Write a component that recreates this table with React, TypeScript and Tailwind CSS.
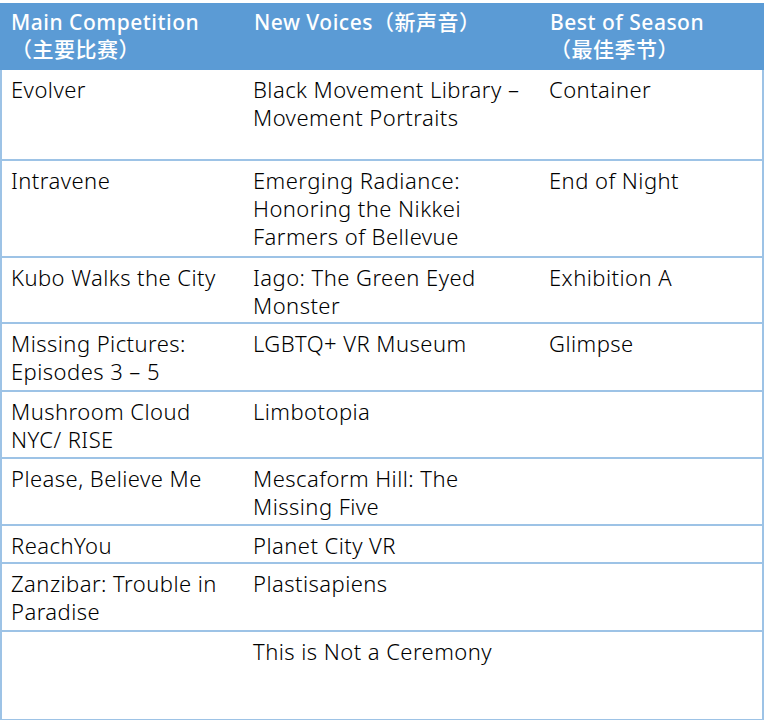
const rows: { h: string; cells: string[] }[] = [
  { h: "h-[89px]", cells: ["Evolver", "Black Movement Library –\nMovement Portraits", "Container"] },
  { h: "h-[97px]", cells: ["Intravene", "Emerging Radiance:\nHonoring the Nikkei\nFarmers of Bellevue", "End of Night"] },
  { h: "h-[66px]", cells: ["Kubo Walks the City", "Iago: The Green Eyed\nMonster", "Exhibition A"] },
  { h: "h-[68px]", cells: ["Missing Pictures:\nEpisodes 3 – 5", "LGBTQ+ VR Museum", "Glimpse"] },
  { h: "h-[67px]", cells: ["Mushroom Cloud\nNYC/ RISE", "Limbotopia", ""] },
  { h: "h-[67px]", cells: ["Please, Believe Me", "Mescaform Hill: The\nMissing Five", ""] },
  { h: "h-[38px]", cells: ["ReachYou", "Planet City VR", ""] },
  { h: "h-[68px]", cells: ["Zanzibar: Trouble in\nParadise", "Plastisapiens", ""] },
  { h: "h-[89px]", cells: ["", "This is Not a Ceremony", ""] },
];

const font = { fontFamily: '"Noto Sans", "Noto Sans CJK SC", sans-serif' };

export default function App() {
  return (
    <div className="w-[765px] h-[720px] bg-white pt-[3px]" style={font}>
      <div className="w-[764px] border-l-2 border-r-2 border-b-2 border-[#9dc3e6]">
        {/* header */}
        <div className="grid grid-cols-[242px_296px_1fr] h-[67px] bg-[#5b9bd5] text-white text-[21px] leading-[27px] tracking-[0.5px] font-medium pt-[6px] -ml-[2px] -mr-[2px] pl-[2px] pr-[2px]">
          <div className="pl-[9px]">
            Main Competition
            <br />（主要比赛）
          </div>
          <div className="pl-[10px]">New Voices（新声音）</div>
          <div className="pl-[10px]">
            Best of Season
            <br />（最佳季节）
          </div>
        </div>
        {rows.map((r, i) => (
          <div
            key={i}
            className={`grid grid-cols-[242px_296px_1fr] ${r.h} text-[22px] leading-[28px] tracking-[0.45px] font-light text-black pt-[5px] ${i > 0 ? "border-t-2 border-[#9dc3e6]" : ""}`}
          >
            {r.cells.map((c, j) => (
              <div key={j} className="pl-[9px] whitespace-pre-line">
                {c}
              </div>
            ))}
          </div>
        ))}
      </div>
    </div>
  );
}
